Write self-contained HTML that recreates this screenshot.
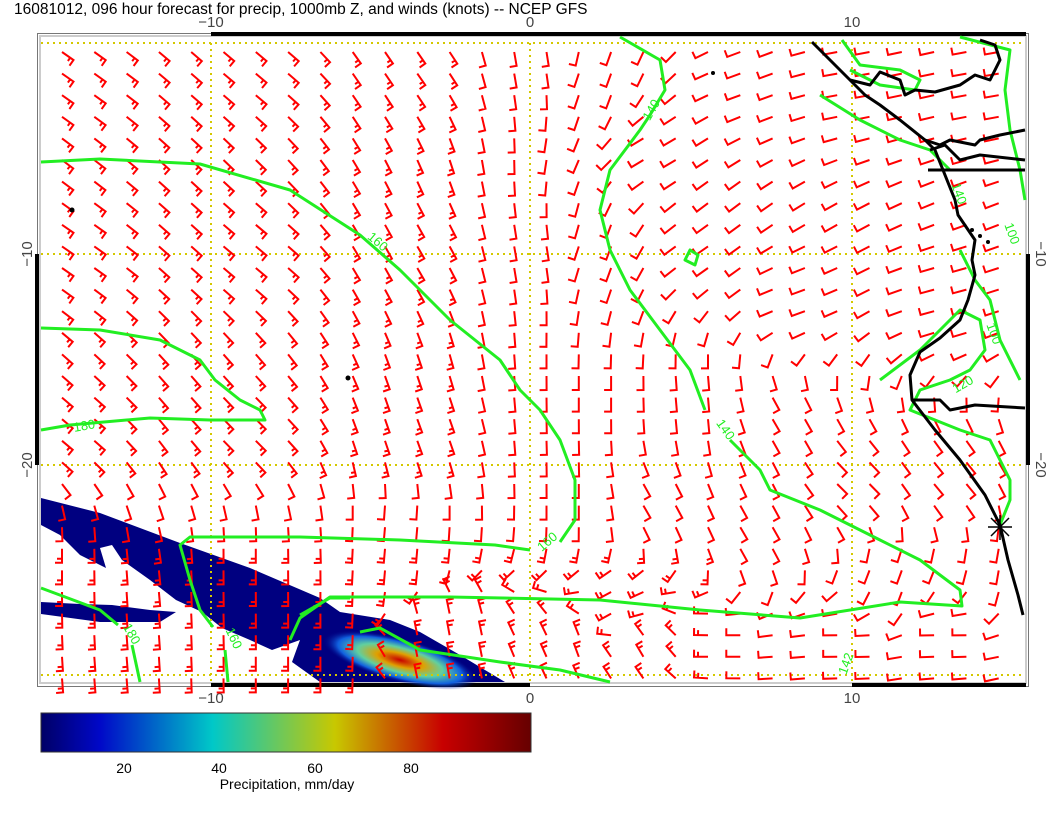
<!DOCTYPE html>
<html><head><meta charset="utf-8"><style>
html,body{margin:0;padding:0;background:#fff;width:1056px;height:816px;overflow:hidden}
svg{display:block}
text{font-family:"Liberation Sans",sans-serif}
</style></head><body>
<svg id="s" width="1056" height="816" viewBox="0 0 1056 816" xmlns="http://www.w3.org/2000/svg">
<defs>
<linearGradient id="cb" x1="0" x2="1" y1="0" y2="0">
<stop offset="0" stop-color="#000066"/><stop offset="0.12" stop-color="#0008c8"/>
<stop offset="0.35" stop-color="#00c8c8"/><stop offset="0.6" stop-color="#c8c800"/>
<stop offset="0.82" stop-color="#c80000"/><stop offset="1" stop-color="#660000"/>
</linearGradient>
<radialGradient id="hot" cx="0.5" cy="0.5" r="0.5">
<stop offset="0" stop-color="#c80000"/><stop offset="0.3" stop-color="#e0a000"/>
<stop offset="0.55" stop-color="#60d0a0"/><stop offset="0.8" stop-color="#1060e0"/><stop offset="1" stop-color="#000080" stop-opacity="0"/>
</radialGradient>
</defs>
<text x="14" y="14" font-size="15.5">16081012, 096 hour forecast for precip, 1000mb Z, and winds (knots) -- NCEP GFS</text>
<rect x="37.5" y="33.5" width="991" height="653" fill="none" stroke="#777" stroke-width="1"/>
<rect x="40" y="36" width="986" height="647" fill="none" stroke="#ccc" stroke-width="2"/>
<rect x="211" y="32" width="815" height="4" fill="#000"/>
<rect x="211" y="683" width="319" height="4" fill="#000"/>
<rect x="852" y="683" width="174" height="4" fill="#000"/>
<rect x="35" y="254" width="4" height="211" fill="#000"/>
<rect x="1026" y="254" width="4" height="211" fill="#000"/>
<g font-size="15" fill="#444" text-anchor="middle">
<text x="211" y="27">−10</text><text x="530" y="27">0</text><text x="852" y="27">10</text>
<text x="211" y="703">−10</text><text x="530" y="703">0</text><text x="852" y="703">10</text>
<text transform="translate(32,254) rotate(-90)">−10</text><text transform="translate(32,465) rotate(-90)">−20</text>
<text transform="translate(1036,254) rotate(90)">−10</text><text transform="translate(1036,465) rotate(90)">−20</text>
</g>
<g fill="#000080">
<path d="M41,498 L100,513 180,543 250,568 320,598 340,612 390,620 420,632 460,655 505,682 320,682 292,662 300,640 272,650 250,640 222,628 202,612 176,600 150,580 122,560 112,545 100,548 106,568 80,555 60,535 41,525Z"/>
<path d="M41,602 L80,604 112,605 150,610 176,612 160,622 100,622 41,614Z"/>
</g>
<ellipse cx="400" cy="660" rx="80" ry="22" fill="url(#hot)" transform="rotate(15 400 660)"/>
<g stroke="#d4c800" stroke-width="2" stroke-dasharray="2,4" fill="none">
<path d="M211,43V682M530,43V682M852,43V682M41,43H1025M41,254H1025M41,465H1025M41,675H1025"/>
</g>
<g id="barbs" stroke="#f00" stroke-width="2" fill="none"></g>
<g stroke="#22ee22" stroke-width="3" fill="none" stroke-linejoin="round">
<path d="M41,162 L100,159 200,164 290,190 360,235 400,270 450,320 500,360 520,390 540,410 560,440 575,480 575,520 560,542"/>
<path d="M530,550 L495,545 400,540 300,537 190,537 180,545 190,580 200,610 213,627"/>
<path d="M225,650 L228,682"/>
<path d="M620,37 L660,60 665,90 650,115 640,130 610,170 600,210 610,250 630,290 660,330 690,370 705,410"/>
<path d="M730,440 L760,470 770,490 820,510 880,540 920,560 960,590 962,606 900,602 800,618 700,610 600,600 450,597 330,597 300,618 290,640"/>
<path d="M360,632 L380,628 420,650 500,662 560,670 610,682"/>
<path d="M41,588 L100,610 118,625"/><path d="M132,645 L140,682"/>
<path d="M41,430 L70,425 150,418 210,420 265,420 260,410 240,400 215,380 200,360 160,340 100,330 41,328"/>
<path d="M300,615 L330,598 350,598"/>
<path d="M842,40 L860,65 900,70 920,80 915,90 880,85 850,70"/>
<path d="M960,37 L1010,50 1005,90 1010,130 1020,170 1025,200"/>
<path d="M820,95 L860,120 900,140 930,150 950,170"/>
<path d="M960,250 L975,280 990,300 1000,340 1020,380"/>
<path d="M880,380 L920,350 940,330 960,310 980,320 985,350 970,370 950,380 920,390 910,410 960,430 990,440 1000,460 1010,480 1010,500 1000,525"/>
<path d="M690,250 L698,255 695,265 685,260Z"/>
</g>
<g font-size="13" fill="#22ee22" text-anchor="middle">
<text transform="translate(375,245) rotate(40)">160</text>
<text transform="translate(655,112) rotate(-60)">140</text>
<text transform="translate(722,432) rotate(55)">140</text>
<text transform="translate(550,545) rotate(-40)">160</text>
<text transform="translate(230,640) rotate(65)">160</text>
<text transform="translate(128,636) rotate(60)">180</text>
<text transform="translate(85,430) rotate(-10)">180</text>
<text transform="translate(850,665) rotate(-70)">142</text>
<text transform="translate(955,195) rotate(70)">140</text>
<text transform="translate(1008,235) rotate(70)">100</text>
<text transform="translate(990,335) rotate(70)">100</text>
<text transform="translate(965,388) rotate(-30)">120</text>
</g>
<g stroke="#000" stroke-width="3" fill="none" stroke-linejoin="round">
<path d="M812,42 L830,60 850,80 865,95 880,105 900,120 925,140 935,150 945,175 955,200 958,215 975,240 972,260 975,275 968,300 960,320 940,338 920,352 910,375 912,400 935,430 960,460 985,495 1000,525 1008,560 1018,595 1023,615"/>
<path d="M850,80 L870,85 880,72 900,80 905,95 915,90 935,92 960,85 975,75 990,80 1000,60 995,45 980,40"/>
<path d="M925,140 L940,145 950,140 975,145 980,140 1000,135 1025,130"/>
<path d="M930,150 L945,145 960,160 980,155 1025,160"/>
<path d="M928,170 L1025,170"/>
<path d="M912,400 L940,400 950,410 975,405 1025,408"/>
</g>
<g stroke="#000" stroke-width="1.5"><path d="M988,527 L1012,527 M1000,515 L1000,540 M991,518 L1009,536 M991,536 L1009,518"/></g>
<g fill="#000"><circle cx="72" cy="210" r="2.5"/><circle cx="348" cy="378" r="2.5"/><circle cx="713" cy="73" r="2"/><circle cx="972" cy="230" r="2"/><circle cx="980" cy="236" r="2"/><circle cx="988" cy="242" r="2"/></g>
<rect x="41" y="713" width="490" height="39" fill="url(#cb)" stroke="#333" stroke-width="1"/>
<g font-size="14" fill="#000" text-anchor="middle">
<text x="124" y="773">20</text><text x="219" y="773">40</text><text x="315" y="773">60</text><text x="411" y="773">80</text>
<text x="287" y="789">Precipitation, mm/day</text>
</g>
</svg>
<script>
(function(){
var g=document.getElementById('barbs'),d='';
var A=[[60,60,35],[250,60,40],[420,60,55],[530,60,80],[600,80,110],[660,150,150],[750,80,160],[850,80,170],[1000,80,170],
[60,250,35],[250,250,40],[420,250,60],[530,250,80],[600,250,110],[700,250,145],[800,300,160],[950,300,165],
[60,430,40],[250,430,45],[420,430,70],[600,400,90],[700,400,85],[780,420,60],[850,480,45],[950,480,50],[1000,560,100],
[60,560,90],[250,560,90],[400,530,95],[580,500,90],[650,500,60],[750,530,60],[620,610,150],
[300,660,90],[450,650,-100],[580,650,-110],[650,650,-120],[720,650,180],[850,650,180],[950,640,180],[900,580,110]];
function ang(x,y){
 var sx=0,sy=0;
 for(var i=0;i<A.length;i++){var dx=x-A[i][0],dy=y-A[i][1],w=1/Math.pow(dx*dx+dy*dy+25,1.6),t=A[i][2]*Math.PI/180;sx+=w*Math.cos(t);sy+=w*Math.sin(t);}
 return Math.atan2(sy,sx);
}
function f(v){return v.toFixed(1);}
for(var r=0;r<30;r++){for(var c=0;c<30;c++){
 var x=62+c*32.3,y=52+r*21.6;
 var a=ang(x,y),L=14;
 var tx=x+L*Math.cos(a),ty=y+L*Math.sin(a);
 var fa=a+Math.PI*0.5,F=7;
 d+='M'+f(x)+','+f(y)+'L'+f(tx)+','+f(ty)+'l'+f(F*Math.cos(fa))+','+f(F*Math.sin(fa));
 var n=((y>540&&x<720)||(x<450&&y<470))?1:0;
 for(var k=1;k<=n;k++){var mx=x+(L-4*k)*Math.cos(a),my=y+(L-4*k)*Math.sin(a),FF=(y>470?5:4);
  d+='M'+f(mx)+','+f(my)+'l'+f(FF*Math.cos(fa))+','+f(FF*Math.sin(fa));}
}}
var p=document.createElementNS('http://www.w3.org/2000/svg','path');p.setAttribute('d',d);g.appendChild(p);
})();
</script>
</body></html>
